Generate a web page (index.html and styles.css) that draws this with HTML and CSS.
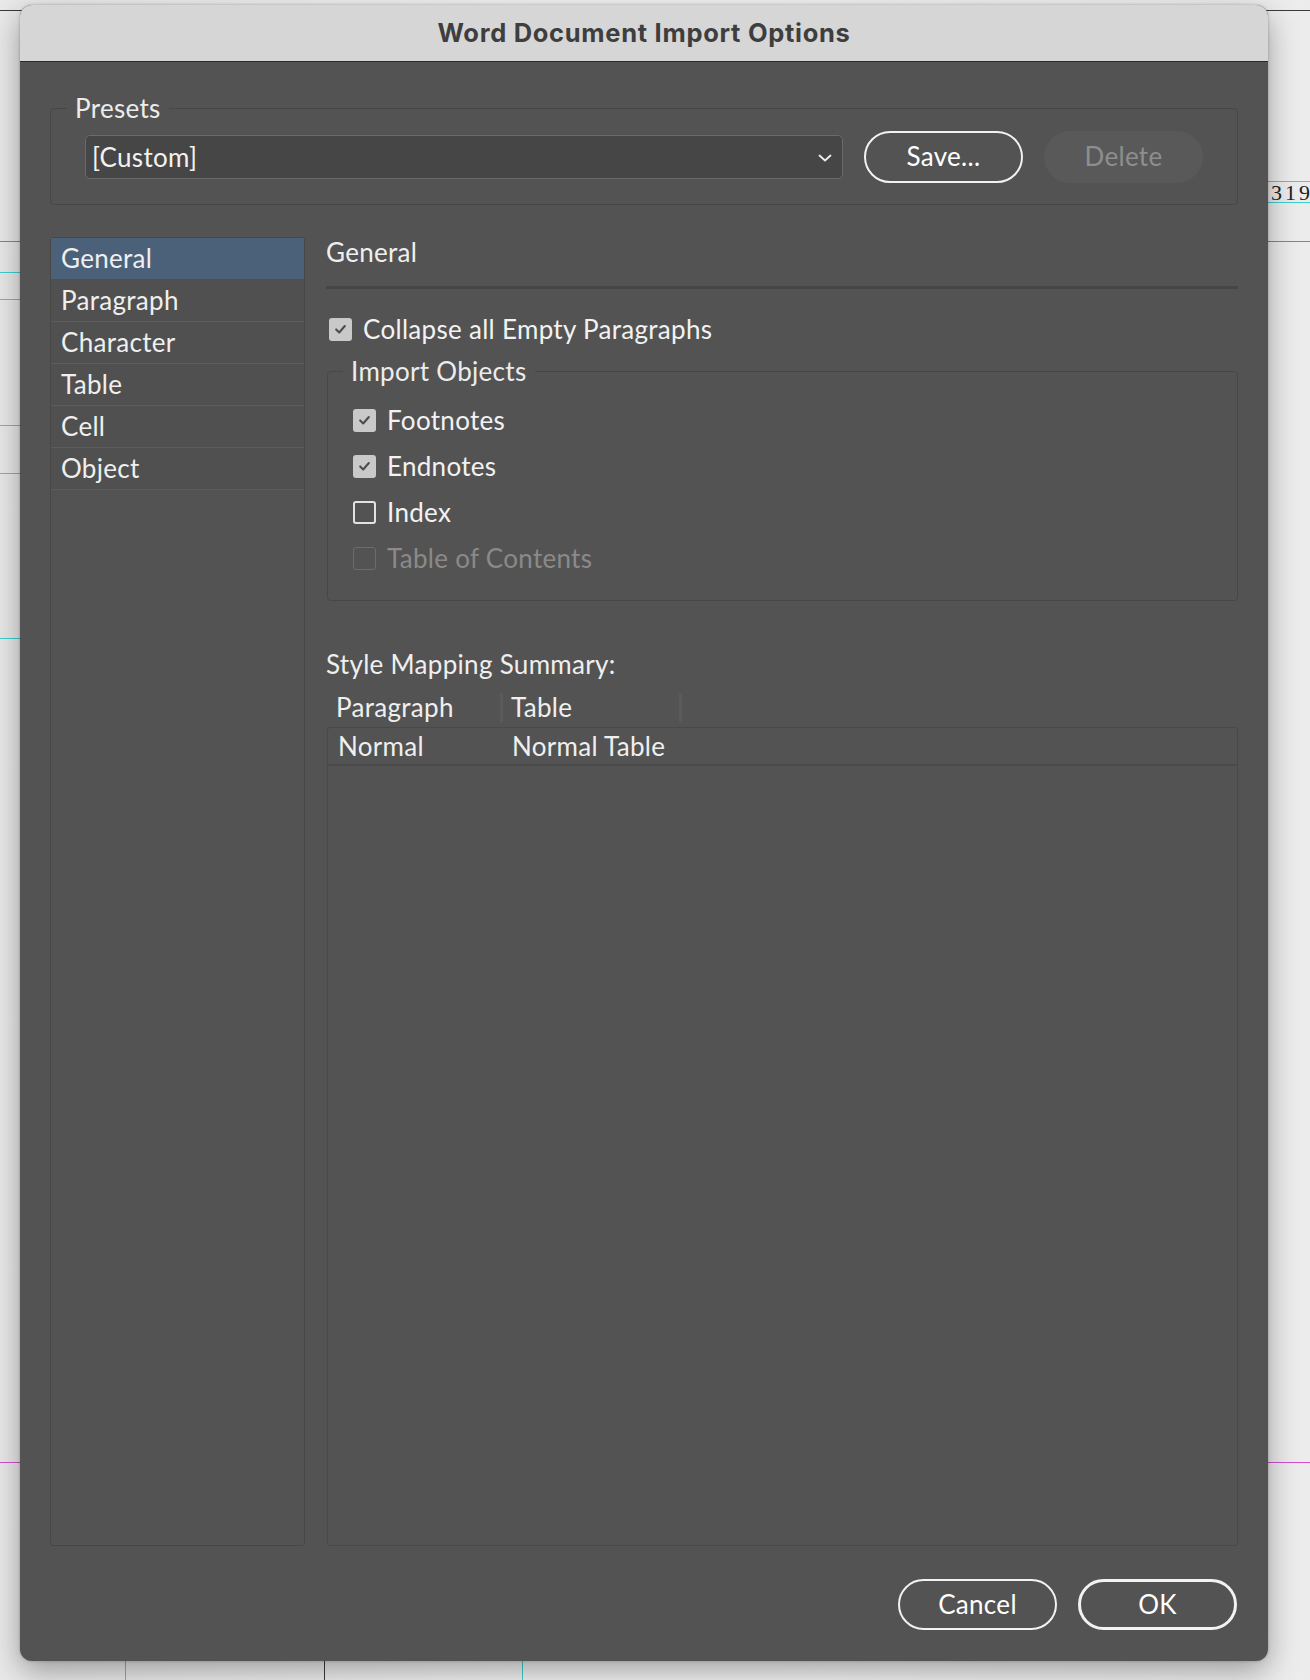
FILE: index.html
```html
<!DOCTYPE html>
<html lang="en">
<head>
<meta charset="utf-8">
<title>Word Document Import Options</title>
<link rel="stylesheet" href="styles.css">
</head>
<body>
<div class="canvas">
  <div class="guide guide-top"></div>
  <div class="guide guide-l g-m" style="top:241px"></div>
  <div class="guide guide-l g-c" style="top:272px"></div>
  <div class="guide guide-l g-c" style="top:299px"></div>
  <div class="guide guide-l g-c" style="top:425px"></div>
  <div class="guide guide-l g-c" style="top:473px"></div>
  <div class="guide guide-l g-c" style="top:638px"></div>
  <div class="guide guide-l g-m" style="top:1462px"></div>
  <div class="guide guide-r g-c" style="top:181px"></div>
  <div class="guide guide-r g-c" style="top:202px"></div>
  <div class="guide guide-r g-m" style="top:241px"></div>
  <div class="guide guide-r g-m" style="top:1462px"></div>
  <div class="page-num">319</div>
  <div class="vguide g-c" style="left:125px"></div>
  <div class="vguide g-d" style="left:324px"></div>
  <div class="vguide g-c" style="left:522px"></div>
</div>

<div class="dialog">
  <div class="titlebar">Word Document Import Options</div>
  <div class="dialog-body">
    <fieldset class="group presets">
      <legend class="group-label">Presets</legend>
      <div class="presets-row">
        <div class="select">
          <span class="select-value">[Custom]</span>
          <svg class="chevron" width="14" height="8" viewBox="0 0 14 8"><polyline points="1.5,1.5 7,6.5 12.5,1.5" fill="none" stroke="#eeeeee" stroke-width="1.8" stroke-linecap="round" stroke-linejoin="round"/></svg>
        </div>
        <button class="btn">Save...</button>
        <button class="btn btn-disabled">Delete</button>
      </div>
    </fieldset>

    <div class="main">
      <ul class="sidebar">
        <li class="nav-item selected">General</li>
        <li class="nav-item">Paragraph</li>
        <li class="nav-item">Character</li>
        <li class="nav-item">Table</li>
        <li class="nav-item">Cell</li>
        <li class="nav-item">Object</li>
      </ul>

      <div class="panel">
        <div class="panel-title">General</div>
        <div class="panel-rule"></div>

        <label class="check-row top-check">
          <span class="cb checked"><svg width="22" height="22" viewBox="0 0 22 22"><polyline points="6,11.5 9.5,15 16,7.5" fill="none" stroke="#4c4c4c" stroke-width="2.4" stroke-linecap="round" stroke-linejoin="round"/></svg></span>
          <span class="check-text">Collapse all Empty Paragraphs</span>
        </label>

        <fieldset class="group objects">
          <legend class="group-label">Import Objects</legend>
          <div class="check-list">
            <label class="check-row">
              <span class="cb checked"><svg width="22" height="22" viewBox="0 0 22 22"><polyline points="6,11.5 9.5,15 16,7.5" fill="none" stroke="#4c4c4c" stroke-width="2.4" stroke-linecap="round" stroke-linejoin="round"/></svg></span>
              <span class="check-text">Footnotes</span>
            </label>
            <label class="check-row">
              <span class="cb checked"><svg width="22" height="22" viewBox="0 0 22 22"><polyline points="6,11.5 9.5,15 16,7.5" fill="none" stroke="#4c4c4c" stroke-width="2.4" stroke-linecap="round" stroke-linejoin="round"/></svg></span>
              <span class="check-text">Endnotes</span>
            </label>
            <label class="check-row">
              <span class="cb"></span>
              <span class="check-text">Index</span>
            </label>
            <label class="check-row disabled">
              <span class="cb"></span>
              <span class="check-text">Table of Contents</span>
            </label>
          </div>
        </fieldset>

        <div class="summary-title">Style Mapping Summary:</div>
        <div class="table-head">
          <div class="th th-para">Paragraph</div>
          <div class="th-sep"></div>
          <div class="th th-table">Table</div>
          <div class="th-sep"></div>
        </div>
        <div class="table-box">
          <div class="tr">
            <div class="td td-para">Normal</div>
            <div class="td">Normal Table</div>
          </div>
        </div>
      </div>
    </div>

    <div class="footer">
      <button class="btn">Cancel</button>
      <button class="btn btn-default">OK</button>
    </div>
  </div>
</div>
</body>
</html>
```

FILE: styles.css
```css
* { box-sizing: border-box; }

html, body {
  margin: 0;
  padding: 0;
}

body {
  width: 1310px;
  height: 1680px;
  overflow: hidden;
  position: relative;
  background: linear-gradient(to right, #e9e9e9 0px, #f4f4f4 40%, #f4f4f4 60%, #ececec 100%);
  padding: 5px 0 0 20px;
  font-family: "Lato", "Open Sans", sans-serif;
  color: #f0f0f0;
}

/* background document canvas */
.canvas {
  position: absolute;
  inset: 0;
  z-index: 0;
}
.guide {
  position: absolute;
  height: 1px;
}
.guide-top {
  left: 0;
  right: 0;
  top: 10px;
  background: #3a3a3a;
}
.guide-l { left: 0; width: 20px; }
.guide-r { left: 1268px; right: 0; }
.g-m { background: #d54fd0; }
.g-c { background: #3fd0d0; }
.g-d { background: #3a3a3a; }
.vguide {
  position: absolute;
  top: 1661px;
  bottom: 0;
  width: 1px;
}
.page-num {
  position: absolute;
  left: 1271px;
  top: 181px;
  font-family: "Liberation Serif", serif;
  font-size: 22px;
  letter-spacing: 3px;
  color: #222;
  line-height: 24px;
}

/* dialog */
.dialog {
  position: relative;
  z-index: 1;
  width: 1248px;
  height: 1656px;
  background: #535353;
  border-radius: 12px;
  overflow: hidden;
  display: flex;
  flex-direction: column;
  box-shadow: 0 0 3px rgba(0,0,0,0.25), 0 10px 30px rgba(0,0,0,0.35);
}

.titlebar {
  height: 57px;
  flex: none;
  background: #d6d6d6;
  border-bottom: 1px solid #2b2b2b;
  display: flex;
  align-items: center;
  justify-content: center;
  font-family: "Inter", "Liberation Sans", sans-serif;
  font-weight: 700;
  font-size: 25.5px;
  letter-spacing: 0.7px;
  color: #3e3e3e;
  padding-bottom: 2px;
}

.dialog-body {
  flex: 1;
  display: flex;
  flex-direction: column;
  padding: 32px 30px 31px 30px;
}

/* groups */
.group {
  margin: 0;
  border: 1px solid #474747;
  border-radius: 4px;
  min-width: 0;
}
.group-label {
  font-size: 26px;
  letter-spacing: 0.3px;
  line-height: 28px;
  color: #ececec;
  padding: 0 8px;
}

.presets {
  height: 111px;
  flex: none;
  padding: 9px 34px 0 34px;
}
.presets .group-label {
  margin-left: -18px;
}
.presets-row {
  display: flex;
  align-items: center;
  gap: 21px;
  height: 52px;
}

.select {
  flex: 1;
  height: 44px;
  background: #464646;
  border: 1px solid #6a6a6a;
  border-radius: 5px;
  display: flex;
  align-items: center;
  justify-content: space-between;
  padding: 0 10px 0 6px;
}
.select-value {
  font-size: 26px;
  letter-spacing: 0.3px;
  color: #f2f2f2;
}
.chevron { display: block; margin-top: 1px; }

.btn {
  width: 159px;
  height: 52px;
  border: 2px solid #f2f2f2;
  border-radius: 26px;
  background: transparent;
  font-family: "Lato", "Open Sans", sans-serif;
  font-size: 26px;
  letter-spacing: 0.3px;
  color: #ffffff;
  padding: 0 0 2px 0;
}
.btn-disabled {
  border-color: transparent;
  background: #595959;
  color: #8e8e8e;
}
.btn-default {
  border-width: 3px;
}

/* main area */
.main {
  flex: 1;
  margin-top: 32px;
  display: flex;
  gap: 21px;
  min-height: 0;
}

.sidebar {
  width: 255px;
  flex: none;
  margin: 0;
  padding: 0;
  list-style: none;
  border: 1px solid #474747;
  border-radius: 3px;
}
.nav-item {
  height: 42px;
  line-height: 40px;
  padding-left: 10px;
  font-size: 26px;
  letter-spacing: 0.3px;
  color: #efefef;
  border-bottom: 1px solid #5c5c5c;
  background: #505050;
}
.nav-item.selected {
  background: #4b6079;
  border-bottom-color: #4f4f4f;
}

.panel {
  flex: 1;
  display: flex;
  flex-direction: column;
  min-width: 0;
}
.panel-title {
  height: 30px;
  line-height: 30px;
  font-size: 26px;
  letter-spacing: 0.3px;
  color: #efefef;
}
.panel-rule {
  margin-top: 19px;
  height: 3px;
  background: #454545;
}

.check-row {
  display: flex;
  align-items: center;
  height: 30px;
  gap: 11px;
}
.top-check {
  margin-top: 25px;
  padding-left: 3px;
}
.check-text {
  font-size: 26px;
  letter-spacing: 0.3px;
  color: #f2f2f2;
}
.cb {
  width: 23px;
  height: 23px;
  flex: none;
  border: 2px solid #e2e2e2;
  border-radius: 3px;
  display: flex;
  align-items: center;
  justify-content: center;
}
.cb svg { display: block; }
.cb.checked {
  background: #c9c9c9;
  border-color: #c9c9c9;
}
.check-row.disabled .cb {
  border: 1.5px solid #6c6c6c;
}
.check-row.disabled .check-text {
  color: #8a8a8a;
}

.objects {
  margin-top: 13px;
  margin-left: 1px;
  padding: 20px 24px 27px 25px;
}
.objects .group-label {
  margin-left: -10px;
}
.check-list {
  display: flex;
  flex-direction: column;
  gap: 16px;
}

.summary-title {
  margin-top: 48px;
  height: 30px;
  line-height: 30px;
  font-size: 26px;
  letter-spacing: 0.3px;
  color: #efefef;
}

.table-head {
  margin-top: 13px;
  height: 30px;
  display: flex;
  align-items: center;
}
.th {
  font-size: 26px;
  letter-spacing: 0.3px;
  color: #efefef;
  line-height: 30px;
}
.th-para {
  width: 174px;
  padding-left: 10px;
}
.th-table {
  width: 176px;
  padding-left: 8px;
}
.th-sep {
  width: 3px;
  height: 29px;
  background: #5a5a5a;
}

.table-box {
  flex: 1;
  margin-top: 5px;
  margin-left: 1px;
  border: 1px solid #494949;
  border-radius: 3px;
}
.tr {
  display: flex;
  height: 38px;
  align-items: center;
  border-bottom: 2px solid #4a4a4a;
}
.td {
  font-size: 26px;
  letter-spacing: 0.3px;
  color: #efefef;
}
.td-para {
  width: 184px;
  padding-left: 10px;
}

.footer {
  margin-top: 33px;
  height: 51px;
  flex: none;
  display: flex;
  justify-content: flex-end;
  gap: 21px;
  padding-right: 1px;
}
.footer .btn {
  height: 51px;
  width: 159px;
}
```
